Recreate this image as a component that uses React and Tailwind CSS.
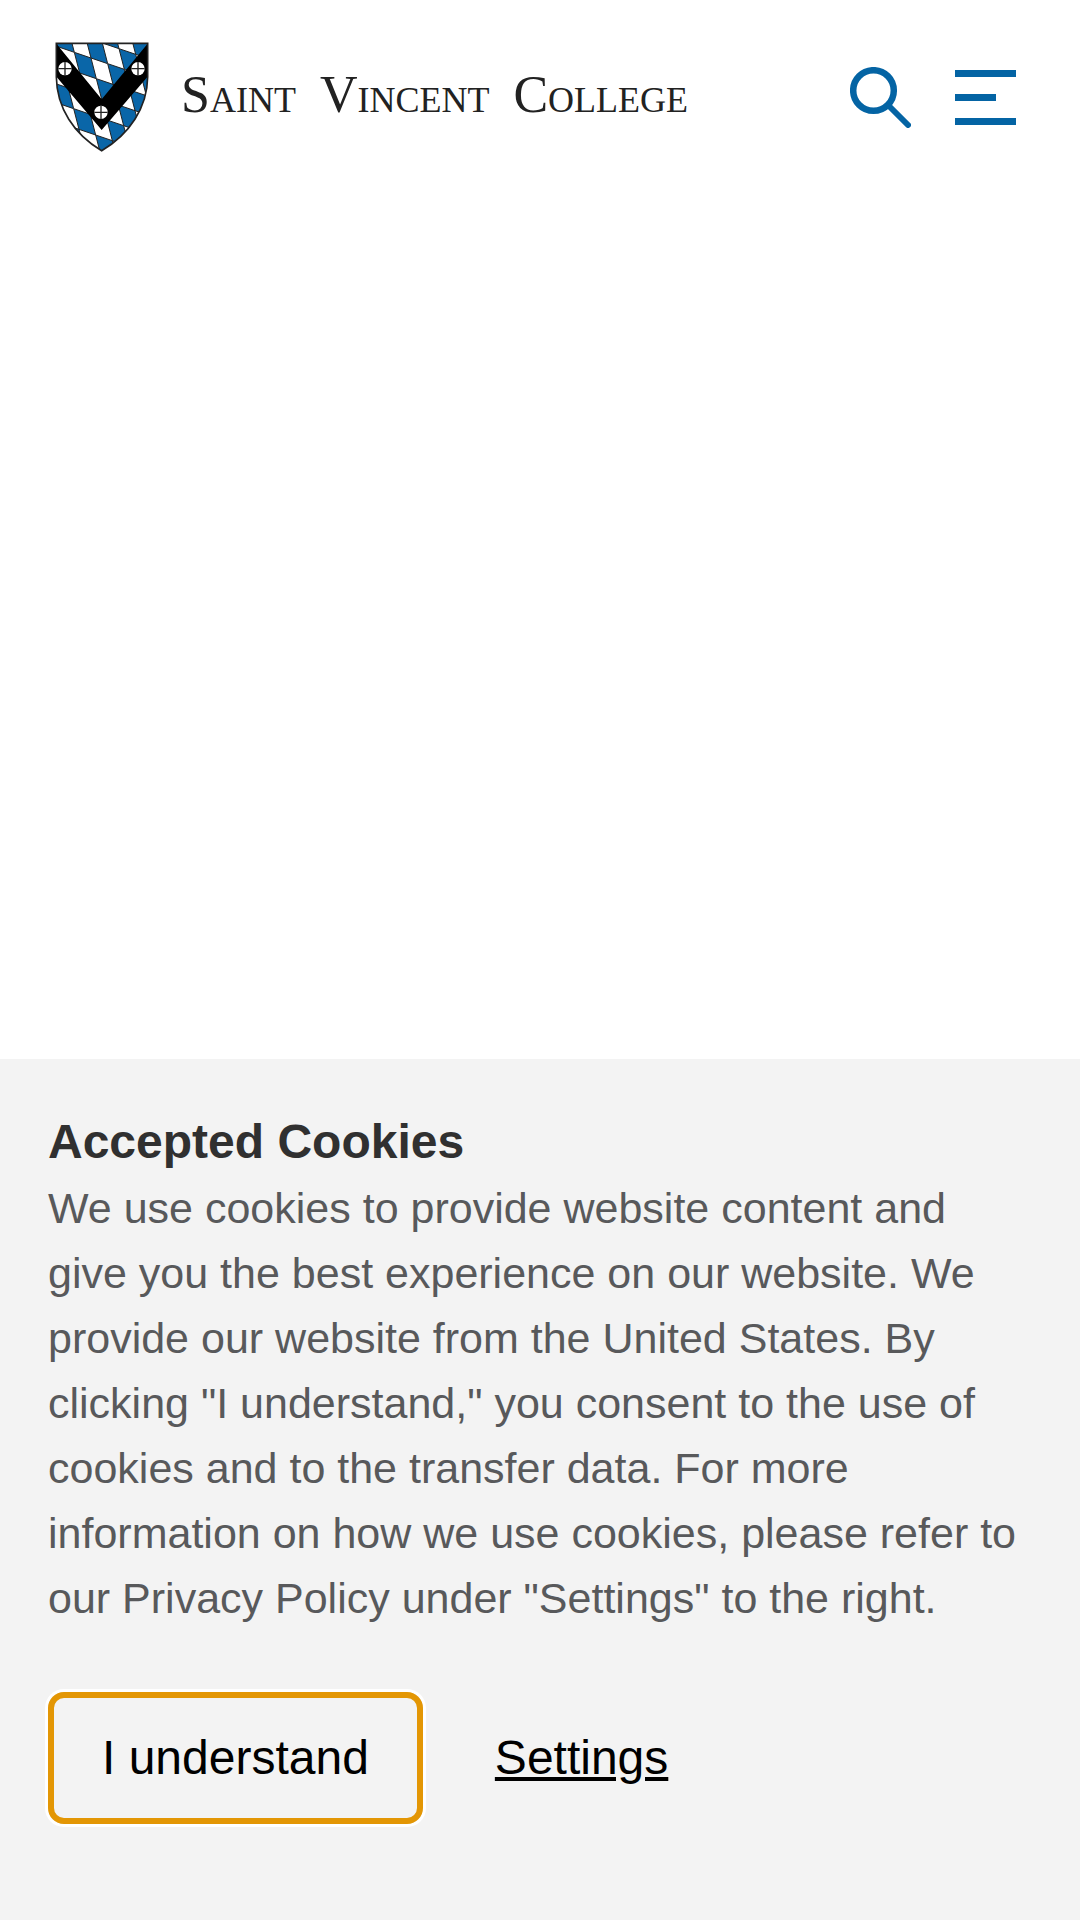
import React from 'react';

const TILE = 'M0 0L50 17L66 79L16 62Z';
const OUTLINE = 'M49 39H323V140C322 232 268 312 185 361C102 312 50 232 49 140Z';

const ShieldLogo = () => {
  const cells = [];
  for (let i = -8; i <= 8; i++) {
    for (let j = -8; j <= 8; j++) {
      if ((i + j) % 2 === 0) {
        cells.push({ x: 187 + i * 50 + j * 16, y: 38 + i * 17 + j * 62 });
      }
    }
  }

  return (
    <svg viewBox="45 35 282 330" className="h-[110px] w-[94px] shrink-0" aria-hidden="true">
      <defs>
        <clipPath id="shield">
          <path d={OUTLINE} />
        </clipPath>
      </defs>
      <g clipPath="url(#shield)">
        <rect x="45" y="35" width="282" height="330" fill="#0a66a8" />
        {cells.map((cell, index) => (
          <path key={index} d={TILE} transform={`translate(${cell.x} ${cell.y})`} fill="#fff" stroke="#222" strokeWidth="3" />
        ))}
        <path d="M45 35L185 207L327 35V134L185 299L45 134Z" fill="#000" />
      </g>
      <path d={OUTLINE} fill="none" stroke="#222" strokeWidth="5" />
      {[[75, 115], [294, 115], [183, 246]].map(([cx, cy]) => (
        <g key={`${cx}-${cy}`}>
          <circle cx={cx} cy={cy} r="20" fill="#fff" />
          <path d={`M${cx - 20} ${cy}h40M${cx} ${cy - 20}v40`} stroke="#222" strokeWidth="4" />
        </g>
      ))}
    </svg>
  );
};

const Header = () => (
  <header className="flex items-center justify-between pt-[42px] pr-16 pl-[55px]">
    <a href="#home" className="flex items-center gap-8 text-[#222]">
      <ShieldLogo />
      <span className="flex gap-6 pb-1 font-['Liberation_Serif',serif] text-[52px] leading-none whitespace-nowrap [font-variant-caps:small-caps]">
        <span>Saint</span>
        <span>Vincent</span>
        <span>College</span>
      </span>
    </a>
    <div className="flex items-center gap-11">
      <button type="button" aria-label="Search">
        <svg viewBox="0 0 61 61" className="size-[61px]" fill="none" stroke="#0464a4">
          <circle cx="23.5" cy="23.5" r="20.3" strokeWidth="6.5" />
          <path d="M39 39L58 58" strokeWidth="6" strokeLinecap="round" />
        </svg>
      </button>
      <button type="button" aria-label="Menu">
        <svg viewBox="0 0 61 55" className="h-[55px] w-[61px]" fill="#0464a4">
          <path d="M0 0H61V7H0ZM0 24H41V31H0ZM0 48H61V55H0Z" />
        </svg>
      </button>
    </div>
  </header>
);

const CookieBanner = () => (
  <section
    aria-labelledby="cookie-title"
    className="bg-[#f3f3f3] px-12 pt-12 pb-24 font-['Liberation_Sans',sans-serif]"
  >
    <h2 id="cookie-title" className="text-[48px] leading-[69px] font-bold text-[#303030]">
      Accepted Cookies
    </h2>
    <p className="text-[43px] leading-[65px] text-[#58595b]">
      We use cookies to provide website content and give you the best experience on our website. We
      provide our website from the United States. By clicking "I understand," you consent to the use
      of cookies and to the transfer data. For more information on how we use cookies, please refer
      to our Privacy Policy under "Settings" to the right.
    </p>
    <div className="mt-[61px] flex items-center gap-[72px] text-[48px] leading-[72px] text-black">
      <button
        type="button"
        className="rounded-2xl border-[6px] border-[#e39604] px-12 py-6 ring-[3px] ring-white"
      >
        I understand
      </button>
      <button type="button" className="underline">
        Settings
      </button>
    </div>
  </section>
);

const App = () => (
  <div className="flex min-h-screen flex-col bg-white">
    <Header />
    <main className="flex-1" />
    <CookieBanner />
  </div>
);

export default App;
